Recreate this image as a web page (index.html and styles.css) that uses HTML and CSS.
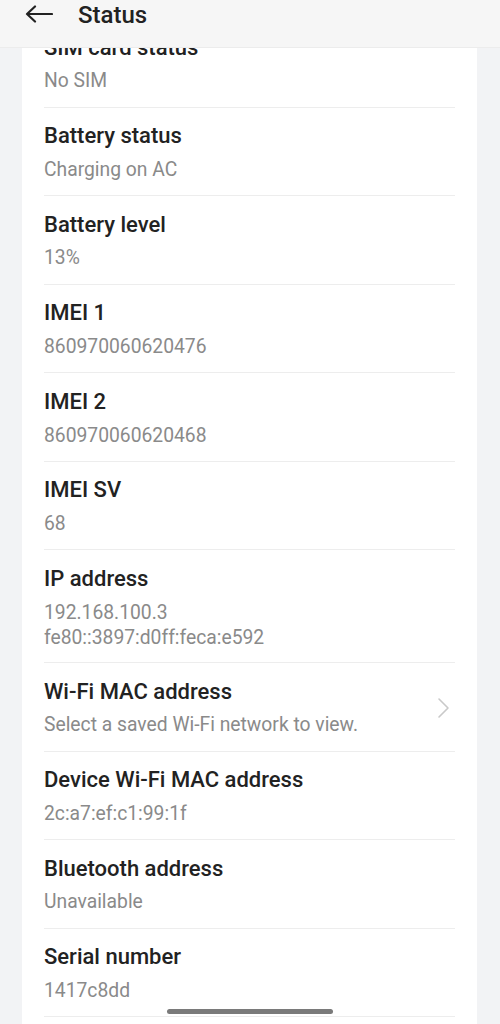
FILE: index.html
```html
<html>
<head>
<link rel="stylesheet" href="styles.css">
</head>
<body>
<div id="phone">
    <!-- Toolbar, lies over the scrolled list -->
    <div class="toolbar">
        <svg class="back" width="28" height="20" viewBox="0 0 28 20">
            <path d="M2 10H27M10 2.5L2 10L10 17.5" fill="none" stroke="#222" stroke-width="2.2" stroke-linecap="round" stroke-linejoin="round"/>
        </svg>
        <span class="title">Status</span>
    </div>

    <div class="card">
        <div class="row">
            <div class="label">SIM card status</div>
            <div class="value">No SIM</div>
        </div>
        <div class="row">
            <div class="label">Battery status</div>
            <div class="value">Charging on AC</div>
        </div>
        <div class="row">
            <div class="label">Battery level</div>
            <div class="value">13%</div>
        </div>
        <div class="row">
            <div class="label">IMEI 1</div>
            <div class="value">860970060620476</div>
        </div>
        <div class="row">
            <div class="label">IMEI 2</div>
            <div class="value">860970060620468</div>
        </div>
        <div class="row">
            <div class="label">IMEI SV</div>
            <div class="value">68</div>
        </div>
        <div class="row">
            <div class="label">IP address</div>
            <div class="value multi">192.168.100.3<br>fe80::3897:d0ff:feca:e592</div>
        </div>
        <div class="row link">
            <div class="text">
                <div class="label">Wi-Fi MAC address</div>
                <div class="value">Select a saved Wi-Fi network to view.</div>
            </div>
            <svg class="chevron" width="14" height="22" viewBox="0 0 14 22">
                <path d="M2 2L11 11L2 20" fill="none" stroke="#c9c9c9" stroke-width="1.6" stroke-linecap="round" stroke-linejoin="round"/>
            </svg>
        </div>
        <div class="row">
            <div class="label">Device Wi-Fi MAC address</div>
            <div class="value">2c:a7:ef:c1:99:1f</div>
        </div>
        <div class="row">
            <div class="label">Bluetooth address</div>
            <div class="value">Unavailable</div>
        </div>
        <div class="row">
            <div class="label">Serial number</div>
            <div class="value">1417c8dd</div>
        </div>
    </div>

    <div class="home-bar"></div>
</div>
</body>
</html>
```

FILE: styles.css
```css
* {
    margin: 0;
    padding: 0;
    box-sizing: border-box;
}

html, body {
    height: 100%;
    overflow: hidden;
}

body {
    background: #f2f3f5;
    font-family: Roboto, "Liberation Sans", Arial, sans-serif;
}

#phone {
    position: relative;
    height: 1024px;
    overflow: hidden;
}

/* Toolbar */
.toolbar {
    position: absolute;
    top: 0;
    left: 0;
    right: 0;
    z-index: 2;
    height: 48px;
    display: flex;
    align-items: flex-start;
    padding: 0 0 0 25px;
    background: #f6f6f6;
    border-bottom: 1px solid #ececec;
}

.toolbar .back {
    display: block;
    margin: 4px 25px 0 0;
}

.toolbar .title {
    margin-top: 1px;
    font-size: 24px;
    font-weight: 500;
    color: #222;
    line-height: 28px;
}

/* List card, runs on past the bottom edge */
.card {
    margin: 0 23px 0 22px;
    padding: 19px 22px 60px;
    background: #fff;
    border-radius: 12px;
}

.row {
    padding: 14.5px 0 12.4px;
    border-top: 1px solid #ededed;
}

.row:first-child {
    border-top: none;
}

.row:last-child {
    border-bottom: 1px solid #ededed;
}

.row.link {
    display: flex;
    align-items: center;
}

.row.link .text {
    flex: 1;
}

.row .chevron {
    display: block;
    margin-right: 4px;
}

.label {
    font-size: 22px;
    font-weight: 500;
    line-height: 28px;
    color: #222;
}

.value {
    margin-top: 6.7px;
    font-size: 19.3px;
    line-height: 26px;
    color: #8a8a8a;
}

.value.multi {
    line-height: 25px;
}

/* Gesture bar */
.home-bar {
    position: absolute;
    left: 167px;
    bottom: 10px;
    width: 166px;
    height: 5px;
    border-radius: 3px;
    background: #7a7a7a;
}
```
